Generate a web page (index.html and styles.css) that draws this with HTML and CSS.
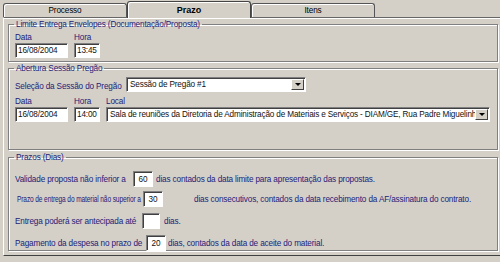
FILE: index.html
```html
<!DOCTYPE html>
<html lang="pt">
<head>
    <meta charset="UTF-8">
    <title>Prazo</title>
    <link rel="stylesheet" href="styles.css">
</head>
<body>
    <div class="window">
        <div class="tabs">
            <div class="tab">Processo</div>
            <div class="tab active">Prazo</div>
            <div class="tab">Itens</div>
        </div>
        <div class="panel">
            <fieldset class="group group-limite">
                <legend>Limite Entrega Envelopes (Documentação/Proposta)</legend>
                <div class="fields">
                    <div class="field">
                        <label>Data</label>
                        <div class="edit w-date">16/08/2004</div>
                    </div>
                    <div class="field">
                        <label>Hora</label>
                        <div class="edit w-time">13:45</div>
                    </div>
                </div>
            </fieldset>

            <fieldset class="group group-sessao">
                <legend>Abertura Sessão Pregão</legend>
                <div class="sessao-row">
                    <label class="sessao-label">Seleção da Sessão do Pregão</label>
                    <div class="combo w-sessao">
                        <span class="combo-text">Sessão de Pregão #1</span>
                        <span class="combo-btn"></span>
                    </div>
                </div>
                <div class="fields">
                    <div class="field">
                        <label>Data</label>
                        <div class="edit w-date">16/08/2004</div>
                    </div>
                    <div class="field">
                        <label>Hora</label>
                        <div class="edit w-time">14:00</div>
                    </div>
                    <div class="field">
                        <label>Local</label>
                        <div class="combo w-local">
                            <span class="combo-text">Sala de reuniões da Diretoria de Administração de Materiais e Serviços - DIAM/GE, Rua Padre Miguelinho</span>
                            <span class="combo-btn"></span>
                        </div>
                    </div>
                </div>
            </fieldset>

            <fieldset class="group group-prazos">
                <legend>Prazos (Dias)</legend>
                <div class="prazo-row row-validade">
                    <span class="prazo-label">Validade proposta não inferior a</span>
                    <div class="edit w-num">60</div>
                    <span class="prazo-after">dias contados da data limite para apresentação das propostas.</span>
                </div>
                <div class="prazo-row row-entrega">
                    <span class="prazo-label"><span class="squeeze">Prazo de entrega do material não superior a</span></span>
                    <div class="edit w-num">30</div>
                    <span class="prazo-after">dias consecutivos, contados da data recebimento da AF/assinatura do contrato.</span>
                </div>
                <div class="prazo-row row-antecipada">
                    <span class="prazo-label">Entrega poderá ser antecipada até</span>
                    <div class="edit w-num"></div>
                    <span class="prazo-after">dias.</span>
                </div>
                <div class="prazo-row row-pagamento">
                    <span class="prazo-label">Pagamento da despesa no prazo de</span>
                    <div class="edit w-num">20</div>
                    <span class="prazo-after">dias, contados da data de aceite do material.</span>
                </div>
            </fieldset>
        </div>
    </div>
</body>
</html>
```
FILE: styles.css
```css
body {
    margin: 0;
    background-color: #d4d0c8;
    font-family: "Liberation Sans", Arial, sans-serif;
    font-size: 8.2px;
    letter-spacing: -0.15px;
    color: #1c1c78;
}
.window {
    width: 500px;
    height: 262px;
    overflow: hidden;
}
.tabs {
    display: flex;
    align-items: flex-end;
    height: 17px;
    padding-left: 3px;
}
.tab {
    width: 122px;
    height: 13px;
    line-height: 13px;
    text-align: center;
    color: #000;
    border: 1px solid #555;
    border-bottom: none;
    border-radius: 3px 3px 0 0;
    box-shadow: inset 1px 1px 0 #fff;
}
.tab.active {
    height: 16px;
    line-height: 17px;
    margin-bottom: -1px;
    position: relative;
    font-weight: bold;
    font-size: 9px;
    letter-spacing: 0;
    background-color: #d4d0c8;
    border-color: #444;
}
.panel {
    height: 239px;
    margin-right: -4px;
    margin-left: 3px;
    padding: 1px 6px 0 4px;
    border-top: 1px solid #666;
    border-left: 1px solid #fff;
    box-shadow: inset 0 1px 0 #fff;
    border-bottom: 1px solid #404040;
    box-sizing: border-box;
}
.group {
    margin: 0;
    border: 1px solid #808080;
    box-shadow: inset 1px 1px 0 #fff, 1px 1px 0 #fff;
    padding: 2px 6px 0 6px;
}
.group legend {
    padding: 0 2px;
    margin-left: -1px;
    line-height: 11px;
}
.group-limite {
    height: 43px;
    box-sizing: border-box;
}
.group-sessao {
    margin-top: 1px;
    height: 87px;
    box-sizing: border-box;
}
.group-prazos {
    margin-top: 2px;
    height: 99px;
    box-sizing: border-box;
    padding-top: 8px;
}
.fields {
    display: flex;
    gap: 6px;
}
.field {
    display: flex;
    flex-direction: column;
}
.field label {
    line-height: 11px;
}
.edit {
    height: 15px;
    line-height: 14px;
    padding: 0 2px;
    background-color: #fff;
    color: #111;
    border-top: 1px solid #808080;
    border-left: 1px solid #808080;
    border-right: 1px solid #fff;
    border-bottom: 1px solid #fff;
    box-shadow: inset 1px 1px 0 #404040;
    box-sizing: border-box;
    white-space: nowrap;
    overflow: hidden;
}
.w-date {
    width: 53px;
}
.w-time {
    width: 26px;
}
.w-num {
    width: 20px;
    height: 16px;
    line-height: 15px;
    text-align: center;
}
.combo {
    display: flex;
    height: 15px;
    background-color: #fff;
    color: #111;
    border-top: 1px solid #808080;
    border-left: 1px solid #808080;
    border-right: 1px solid #fff;
    border-bottom: 1px solid #fff;
    box-shadow: inset 1px 1px 0 #404040;
    box-sizing: border-box;
}
.combo-text {
    flex: 1;
    line-height: 13px;
    padding-left: 3px;
    white-space: nowrap;
    overflow: hidden;
}
.combo-btn {
    width: 13px;
    margin: 1px 1px 1px 0;
    background-color: #d4d0c8;
    border-top: 1px solid #fff;
    border-left: 1px solid #fff;
    border-right: 1px solid #404040;
    border-bottom: 1px solid #404040;
    box-sizing: border-box;
    display: flex;
    align-items: center;
    justify-content: center;
}
.combo-btn::after {
    content: "";
    border-left: 3px solid transparent;
    border-right: 3px solid transparent;
    border-top: 3px solid #000;
}
.w-sessao {
    width: 180px;
}
.w-local {
    width: 384px;
}
.sessao-row {
    display: flex;
    align-items: center;
    margin-top: 1px;
    margin-bottom: 4px;
}
.sessao-label {
    width: 111px;
    padding-top: 3px;
    white-space: nowrap;
}
.prazo-row {
    display: flex;
    align-items: center;
    height: 16px;
    white-space: nowrap;
}
.prazo-label {
    flex-shrink: 0;
}
.prazo-after {
    margin-left: 3px;
}
.row-validade .prazo-label {
    width: 118px;
}
.row-entrega {
    margin-top: 4px;
    padding-left: 2px;
}
.row-entrega .prazo-label {
    width: 126px;
}
.squeeze {
    display: inline-block;
    transform: scaleX(0.805);
    transform-origin: left center;
}
.row-entrega .prazo-after {
    margin-left: 31px;
}
.row-antecipada {
    margin-top: 6px;
}
.row-antecipada .prazo-label {
    width: 127px;
}
.row-antecipada .w-num {
    width: 18px;
}
.row-antecipada .prazo-after {
    margin-left: 4px;
}
.row-pagamento {
    margin-top: 6px;
}
.row-pagamento .prazo-label {
    width: 131px;
}
.row-pagamento .prazo-after {
    margin-left: 2px;
}
```
